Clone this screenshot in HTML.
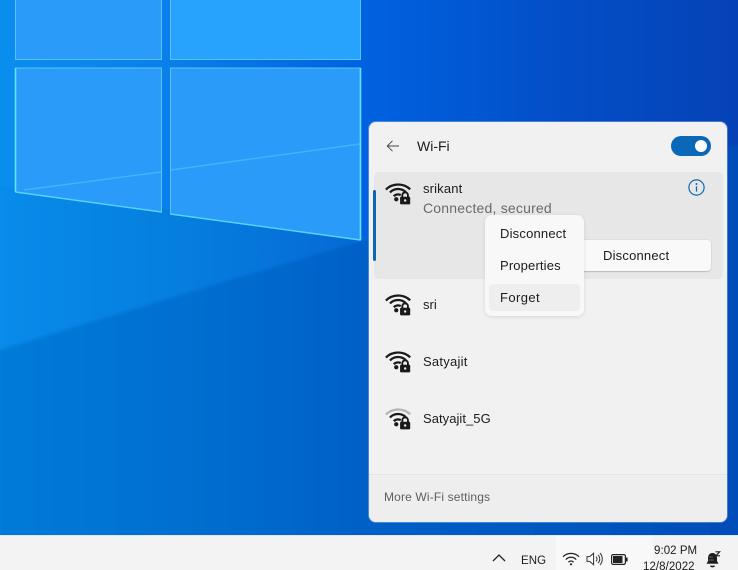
<!DOCTYPE html>
<html><head><meta charset="utf-8"><style>
html,body{margin:0;padding:0;width:738px;height:570px;overflow:hidden;background:#0a66d0}
body{position:relative;font-family:"Liberation Sans",sans-serif;color:#1c1c1c}
.t{position:absolute;white-space:nowrap;line-height:18px;font-size:13px;letter-spacing:.15px}
svg{position:absolute;overflow:visible}
</style></head><body>
<svg style="left:0;top:0" width="738" height="570" viewBox="0 0 738 570">
<defs>
<linearGradient id="bg" x1="0" y1="0" x2="1" y2="0"><stop offset="0" stop-color="#0a8eee"/><stop offset=".22" stop-color="#0a80ea"/><stop offset=".49" stop-color="#0062e0"/><stop offset=".75" stop-color="#034fc8"/><stop offset="1" stop-color="#0642b6"/></linearGradient>
<linearGradient id="mid" gradientUnits="userSpaceOnUse" x1="0" y1="0" x2="370" y2="0"><stop offset="0" stop-color="#088bea"/><stop offset=".5" stop-color="#057ede"/><stop offset="1" stop-color="#0668d4"/></linearGradient>
<linearGradient id="low" x1="0" y1="0" x2="1" y2="0"><stop offset="0" stop-color="#047cda"/><stop offset=".25" stop-color="#0270d0"/><stop offset=".5" stop-color="#0260c8"/><stop offset="1" stop-color="#044cb8"/></linearGradient>
<filter id="soft" x="-5%" y="-5%" width="110%" height="110%"><feGaussianBlur stdDeviation="1.5"/></filter>
</defs>
<rect width="738" height="570" fill="url(#bg)"/>
<polygon points="-5,185 375,238 375,238 -5,352" fill="url(#mid)"/>
<polygon points="-20,356 190,292 365,240 420,222 760,140 760,560 -20,560" fill="url(#low)" filter="url(#soft)"/>
<g fill="#2a9bf8" stroke="#58c4fb" stroke-width="1">
<polygon points="15.5,-2 161.5,-2 161.5,59.5 15.5,59.5"/>
<polygon points="170.5,-2 360.5,-2 360.5,59.5 170.5,59.5" fill="#28a3fd"/>
<polygon points="15.5,68 161.5,68 161.5,212 15.5,192"/>
<polygon points="170.5,68 360.5,68 360.5,240 170.5,214"/>
</g>
<path d="M24,190 161,172M171,170 360,144" stroke="#3cb8fb" stroke-width="1.4" fill="none"/>
<path d="M15.5,68V192M360.5,68V240" stroke="#60e4fc" stroke-width="1.6"/>
<path d="M15.5,192 161.5,212M170.5,214 360.5,240" stroke="#58d4fc" stroke-width="1.4"/>
</svg>

<div style="position:absolute;left:0;top:535px;width:738px;height:35px;background:#f3f3f4;border-top:1px solid #dfe8f4;box-sizing:border-box"></div>
<div style="position:absolute;left:556px;top:536px;width:97px;height:34px;background:#f8f8f9"></div>

<div style="position:absolute;left:369px;top:122px;width:358px;height:400px;background:#f1f1f1;border-radius:7px;box-shadow:0 0 0 1px rgba(225,235,250,.3);overflow:hidden">
  <div style="position:absolute;left:0;top:352px;width:358px;height:48px;background:#eeeeee;border-top:1px solid #e4e4e4;box-sizing:border-box"></div>
  <div style="position:absolute;left:5px;top:50px;width:349px;height:107px;background:#e7e7e7;border-radius:5px"></div>
</div>
<div style="position:absolute;left:373px;top:190px;width:3px;height:71px;background:#0f67b1;border-radius:2px"></div>
<div style="position:absolute;left:560px;top:240px;width:151px;height:31px;background:#f9f9f9;border-radius:4px;box-shadow:0 1px 1px rgba(0,0,0,.16),0 0 0 1px rgba(0,0,0,.03)"></div>

<svg style="left:386px;top:139px" width="14" height="14" viewBox="0 0 14 14"><path d="M13,7H1.5M6.5,1.8 1.2,7 6.5,12.2" fill="none" stroke="#444" stroke-width=".9"/></svg>
<div class="t" style="left:417px;top:137px;font-size:14px;letter-spacing:0">Wi-Fi</div>

<div style="position:absolute;left:671px;top:136px;width:40px;height:20px;border-radius:10px;background:#0b67b8"></div>
<div style="position:absolute;left:695px;top:140px;width:12px;height:12px;border-radius:6px;background:#fff"></div>

<svg width="0" height="0"><defs>
<g id="lock"><path d="M15.4,14.5v-1.9a2.5,2.5 0 0 1 5,0v1.9" fill="none" stroke="#1a1a1a" stroke-width="1.7"/><rect x="13.4" y="14" width="9" height="6.8" rx="1" fill="#1a1a1a"/><circle cx="17.9" cy="17.3" r="1.1" fill="#e8e8e8"/></g>
<g id="inner"><path d="M4.4,10.2a10,10 0 0 1 14.2,-.2" fill="none" stroke="#1a1a1a" stroke-width="2"/><path d="M7.8,13.5a5.4,5.4 0 0 1 6.2,-1" fill="none" stroke="#1a1a1a" stroke-width="2"/><circle cx="10" cy="16.2" r="1.9" fill="#1a1a1a"/><use href="#lock"/></g>
<g id="wifi"><path d="M.8,7.6a15.5,15.5 0 0 1 21.6,-.2" fill="none" stroke="#1a1a1a" stroke-width="2"/><use href="#inner"/></g>
<g id="wifi3"><path d="M.8,7.6a15.5,15.5 0 0 1 21.6,-.2" fill="none" stroke="#b5b5b5" stroke-width="2"/><use href="#inner"/></g>
</defs></svg>

<svg style="left:385px;top:181px" width="27" height="24" viewBox="0 0 24 21.33"><use href="#wifi"/></svg>
<svg style="left:385px;top:292px" width="27" height="24" viewBox="0 0 24 21.33"><use href="#wifi"/></svg>
<svg style="left:385px;top:349px" width="27" height="24" viewBox="0 0 24 21.33"><use href="#wifi"/></svg>
<svg style="left:385px;top:406px" width="27" height="24" viewBox="0 0 24 21.33"><use href="#wifi3"/></svg>

<div class="t" style="left:423px;top:180px;letter-spacing:.15px">srikant</div>
<div class="t" style="left:423px;top:199px;font-size:14px;color:#6a6a6a;letter-spacing:.2px">Connected, secured</div>
<div class="t" style="left:423px;top:296px;letter-spacing:.05px">sri</div>
<div class="t" style="left:423px;top:353px;letter-spacing:.25px">Satyajit</div>
<div class="t" style="left:423px;top:410px;letter-spacing:.05px">Satyajit_5G</div>

<svg style="left:688px;top:179px" width="17" height="17" viewBox="0 0 17 17"><circle cx="8.5" cy="8.5" r="7.6" fill="none" stroke="#0f67b1" stroke-width="1.2"/><circle cx="8.5" cy="5" r="1" fill="#0f67b1"/><path d="M8.5,7.3V12.6" stroke="#0f67b1" stroke-width="1.3"/></svg>

<div class="t" style="left:603px;top:247px;letter-spacing:.2px">Disconnect</div>

<div style="position:absolute;left:485px;top:215px;width:99px;height:101px;background:#f8f8f8;border-radius:7px;box-shadow:0 1px 4px rgba(0,0,0,.1)"></div>
<div style="position:absolute;left:489px;top:284px;width:91px;height:27px;background:#eeeeee;border-radius:4px"></div>
<div class="t" style="left:500px;top:225px;letter-spacing:.2px">Disconnect</div>
<div class="t" style="left:500px;top:257px">Properties</div>
<div class="t" style="left:500px;top:289px;letter-spacing:.4px">Forget</div>

<div class="t" style="left:384px;top:488px;font-size:12px;color:#5e5e5e;letter-spacing:.15px">More Wi-Fi settings</div>

<svg style="left:492px;top:553px" width="14" height="10" viewBox="0 0 14 10"><path d="M1,8 7,2 13,8" fill="none" stroke="#222" stroke-width="1.3"/></svg>
<div class="t" style="left:521px;top:552px;font-size:11.5px;letter-spacing:.1px">ENG</div>
<svg style="left:562px;top:552px" width="18" height="14" viewBox="0 0 18 14"><path d="M1,4.8a11,11 0 0 1 16,0M3.8,7.6a7,7 0 0 1 10.4,0M6.4,10.2a3.4,3.4 0 0 1 5.2,0" fill="none" stroke="#222" stroke-width="1.2"/><circle cx="9" cy="12.3" r="1.1" fill="#222"/></svg>
<svg style="left:586px;top:552px" width="18" height="14" viewBox="0 0 18 14"><path d="M1,4.6H3.6L7.6,1.2V12.8L3.6,9.4H1Z" fill="none" stroke="#333" stroke-width="1"/><path d="M10,4.6a3.2,3.2 0 0 1 0,4.8M12,2.8a6,6 0 0 1 0,8.4M14,1a9,9 0 0 1 0,12" fill="none" stroke="#333" stroke-width="1"/></svg>
<svg style="left:611px;top:554px" width="17" height="11" viewBox="0 0 17 11"><rect x=".6" y=".6" width="13.8" height="9.8" rx="1.5" fill="none" stroke="#222" stroke-width="1.2"/><rect x="2" y="2" width="9.5" height="7" fill="#222"/><rect x="15" y="3.5" width="1.6" height="4" fill="#222"/></svg>
<div class="t" style="left:654px;top:542px;font-size:11.5px;letter-spacing:.05px">9:02 PM</div>
<div class="t" style="left:643px;top:558px;font-size:11.5px;letter-spacing:.05px">12/8/2022</div>
<svg style="left:705px;top:551px" width="16" height="18" viewBox="0 0 16 18"><path d="M7.5,2C4.2,2 3,4.8 3,7.5V10L1.5,12.8H13.5L12,10V7.5C12,4.8 10.8,2 7.5,2Z" fill="#1c1c1c"/><path d="M4,6H8M3.5,9H9" stroke="#777" stroke-width=".8"/><path d="M5,14.6a2.5,1.8 0 0 0 5,0Z" fill="#1c1c1c"/><path d="M10.5,.8H14.6L11,4.8H15" fill="none" stroke="#222" stroke-width="1.2"/></svg>
</body></html>
